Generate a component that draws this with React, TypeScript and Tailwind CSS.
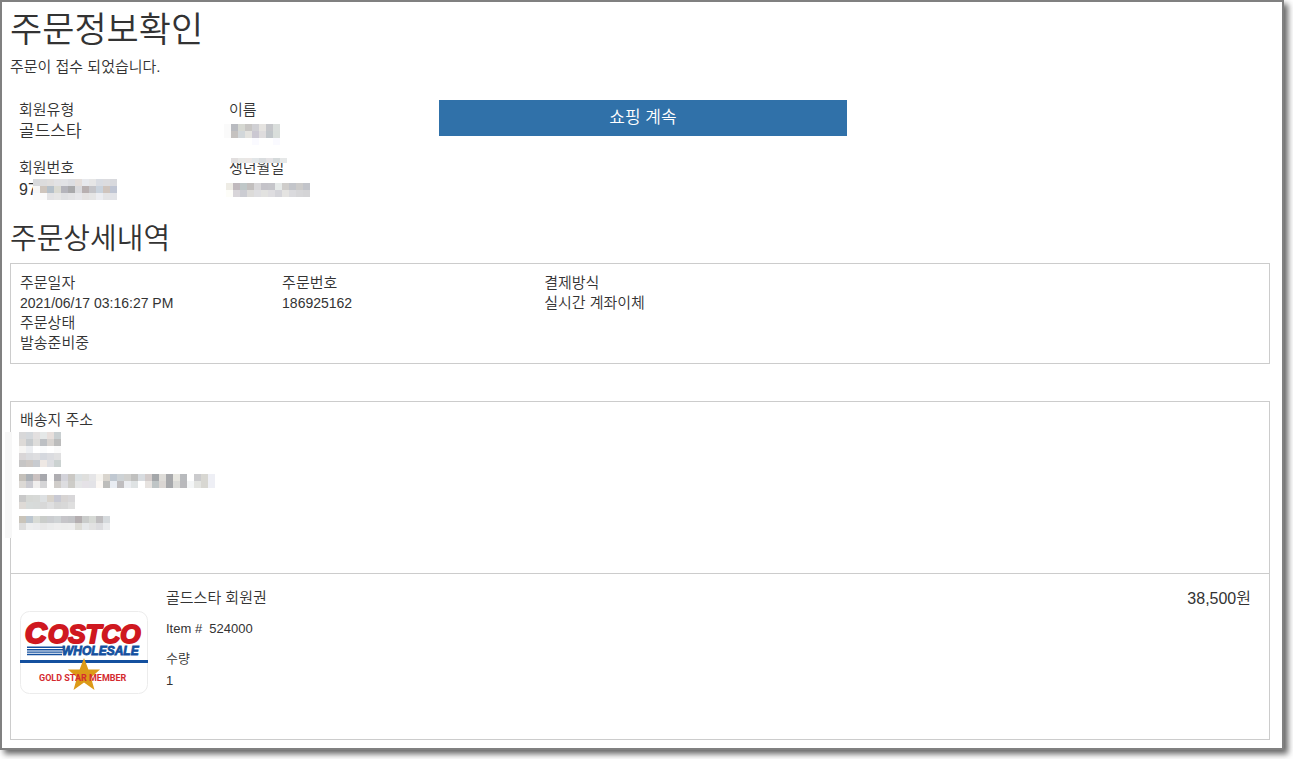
type MosaicProps = {
  rows: string[];
  label: string;
  className?: string;
}

const CELL = 7

// one 7px square per colour, "-" leaves a square empty
const Mosaic = ({ rows, label, className }: MosaicProps) => {
  const grid = rows.map((row) => row.split(" "))
  const width = Math.max(...grid.map((row) => row.length)) * CELL
  const height = grid.length * CELL

  return (
    <svg role="img" aria-label={label} width={width} height={height} shapeRendering="crispEdges" className={className}>
      {grid.map((row, y) =>
        row.map((color, x) =>
          color === "-" ? null : (
            <rect key={`${x}-${y}`} x={x * CELL} y={y * CELL} width={CELL} height={CELL} fill={`#${color}`} />
          )
        )
      )}
    </svg>
  )
}

const nameRows = [
  "fafafa b9bbc0 d6d8d2 c8c6c4 d0d0d4 e5e3e0 c5c6ca dadedc",
  "fafafa c5c2c0 d2d7da e4e3df cbc8d2 dedcdd c1c6ca d9dedb",
  "- - - - fafaff - - fafaff",
]

const numberRows = [
  "d9dadc dcdcdd e0dedd e2e2e4 e2e3e6 dddee2 e4dedb e7e9ed e6e6e6 d9dce2 dcdcdf d8d9dd",
  "f7f7f7 cec5bd b5c0c9 dadad2 b4b4bb a9a9ab dadadd b8b0b0 c4c4c8 c9d2dc cfc4bd bfc5d3",
  "fafafa fafafa e3e3e5 e6e6e6 dfe0e2 e3e3e5 e7e7ea e4e2e1 e5e5e5 ecedf1 e4e4e6 e2e3e7",
]

const birthTopRows = ["e2dfdf e8e8e6 ebe7e5 e2e6e8 dadddf e5e3e5 d5dadb e6e8e8"]

const birthRows = [
  "eeece5 c0b9bd bfc7c8 c2bfbe d8d7d9 c4c3c9 c5c5ca e6eae9 cfcdcb c3c5ca cccbca c2c4ca",
  "fdfdf8 d8d5d9 cbccd2 dcdbd9 dedee1 e2e2e0 dedde0 d4d4d9 e4e3e1 dadadd d6d6d8 d4d4d6",
]

const recipientRows = [
  "d8d8d9 d4d8dc e3e0e0 e5e8e8 e7dfdc c9cfd1",
  "dddad7 c7cbce dedddb bdc0c4 d7d3d0 bcbcbc",
  "f6f5f3 eceef1 ffffff fafbfc ffffff fafafa",
  "d9d6d7 dadbde dedee0 d5d8de dbdce0 e0e0e1",
  "c6c5c5 cdc8c5 c8cbd0 eee8e4 dddee2 cbd2d1",
]

const addressRows = [
  "c4c0ba abb0b5 cbc2c1 a7a8ad fcfcfc aeadb1 d3d3da cac8c4 dbe0e2 dfdfdd e5e5e7 f5f3ef d9d5ce c0c8d1 cdd2d5 d0d0ce c0c0bf d8dce0 d3cccb a4a7aa dedcd8 a7a8ab e7e6e0 b8babd ffffff cbcbcd d8d7d2 eeeff5",
  "dcd9d5 cbcbd1 f0eeed d5d5d7 ffffff d0cdca dddde0 cdccc8 e5e6e7 e5e2e7 e3e3e7 fcf8f4 bdbdbb e9edf3 bfbdbf ebedf1 dfe3e4 ffffff e7e3e0 bfc5c6 dad6d3 a6a8ab dbdbd8 b9b9bc f4f6f7 e3e4e1 d8d7d2 eeeff5",
]

const zipRows = [
  "c9c9c9 d6d8d5 d7d9d7 dde0e2 d8d3cc c8c9d3 d7d4d3 d8d7d9",
  "dedad6 d7dbda d7dad9 d8d8d8 dfdfe0 d6d6d6 d8d8d8 dfdfdf",
]

const phoneRows = [
  "c9c4ba bcc6cf d8dbd6 cacdca cbcdd0 cfd3d5 c6c5c9 c2c3c6 b4aeb0 cacccb d6d9d5 bfbdbf d6dadd",
  "dddddd edeeef ebecee e8e8e8 ebecec eeeeee ededed eeeeee dddcd7 e6e8ea e2e2e2 dcdcdf eaebed",
]

const MemberCard = () => (
  <svg role="img" aria-label="Costco Wholesale Gold Star Member" width="128" height="84" viewBox="0 0 128 84" fontFamily="Liberation Sans, Arial, sans-serif" fontWeight="bold">
    <rect x="0.5" y="0.5" width="127" height="82" rx="9" fill="#fff" stroke="#ececec" />
    <g fontStyle="italic" fill="#cf1820" stroke="#cf1820" strokeLinejoin="round">
      <text x="5" y="32" fontSize="30" strokeWidth="2.4">C</text>
      <text x="28" y="32" fontSize="26" strokeWidth="2">OSTCO</text>
    </g>
    <g fill="#14509f">
      <path d="M7 35.500h38v1.400H7zM7 38h36v1.400H7zM7 40.400h35.500v1.400H7zM7 42.800h35v1.400H7z" />
      <rect y="49" width="128" height="3" />
      <text x="42" y="44" fontSize="12" fontStyle="italic" stroke="#14509f" strokeWidth="0.8">WHOLESALE</text>
    </g>
    <path d="M64 47l4.400 11.500H80l-9 8L74.500 79 64 71.500 53.500 79 57 66.500l-9-8h11.600z" fill="#dc9a18" />
    <text x="19" y="70" fontSize="9" fontFamily="Roboto, Liberation Sans, sans-serif" fill="#d42a30">GOLD STAR MEMBER</text>
  </svg>
)

const orderInfo = [
  { label: "주문일자", value: "2021/06/17 03:16:27 PM" },
  { label: "주문번호", value: "186925162" },
]

export default function App() {
  return (
    <div className="bg-white pr-[9px] pb-[9px] font-['Liberation_Sans','Noto_Sans_CJK_KR',sans-serif] font-[350] text-[#333]">
      <main className="border-2 border-[#808080] bg-white pt-2 pr-3 pb-2 pl-2 shadow-[4px_4px_6px_rgba(0,0,0,0.6)]">
        <h1 className="text-[35px] leading-10 font-[350]">주문정보확인</h1>
        <p className="mt-[7px] text-[15px] leading-5">주문이 접수 되었습니다.</p>

        <section className="mt-[22px] grid grid-cols-6">
          <dl className="pt-px pl-[9px]">
            <dt className="text-[15px] leading-5">회원유형</dt>
            <dd className="text-[17px] leading-6">골드스타</dd>
            <dt className="mt-3.5 text-[15px] leading-5">회원번호</dt>
            <dd className="flex h-6 text-base leading-6">
              <span className="w-3.5">97</span>
              <Mosaic rows={numberRows} label="회원번호 가림" className="relative mt-px" />
            </dd>
          </dl>
          <dl className="pt-px pl-[9px]">
            <dt className="text-[15px] leading-5">이름</dt>
            <dd className="-ml-[5px] h-6 pt-1">
              <Mosaic rows={nameRows} label="이름 가림" />
            </dd>
            <dt className="relative mt-3.5 text-[15px] leading-5">
              생년월일
              <Mosaic rows={birthTopRows} label="가림" className="absolute top-0 left-0.5 h-[5px]" />
            </dt>
            <dd className="-ml-[3px] h-6 pt-[5px]">
              <Mosaic rows={birthRows} label="생년월일 가림" />
            </dd>
          </dl>
          <div className="col-span-2 pt-px pr-[3px] pl-[9px]">
            <button type="button" className="h-9 w-full bg-[#3071a9] text-[17px] leading-6 font-[350] text-white">쇼핑 계속</button>
          </div>
        </section>

        <h2 className="mt-[21px] text-[29px] leading-8 font-[350]">주문상세내역</h2>

        <section className="mt-2 grid grid-cols-[5fr_5fr_14fr] border border-[#ccc] pt-[9px] pb-2.5 text-sm leading-5">
          {orderInfo.map((info) => (
            <dl key={info.label} className="pl-[9px]">
              <dt className="text-[15px] leading-5">{info.label}</dt>
              <dd>{info.value}</dd>
              {info.label === "주문일자" && (
                <>
                  <dt className="text-[15px] leading-5">주문상태</dt>
                  <dd className="text-[15px] leading-5">발송준비중</dd>
                </>
              )}
            </dl>
          ))}
          <dl className="pl-[9px] text-[15px] leading-5">
            <dt>결제방식</dt>
            <dd>실시간 계좌이체</dd>
          </dl>
        </section>

        <section className="mt-[37px] border border-[#ccc]">
          <div className="relative h-[171px] pt-2 pl-[9px]">
            <h3 className="text-[15px] leading-5 font-[350]">배송지 주소</h3>
            <div className="absolute top-[30px] -left-1.5 h-[106px] w-[7px] bg-[#f7f7f7]" />
            <div className="-ml-px flex flex-col gap-[7px] pt-0.5">
              <Mosaic rows={recipientRows} label="받는 사람 가림" />
              <Mosaic rows={addressRows} label="주소 가림" />
              <Mosaic rows={zipRows} label="우편번호 가림" />
              <Mosaic rows={phoneRows} label="전화번호 가림" />
            </div>
          </div>

          <div className="flex h-[166px] items-start border-t border-[#ccc] pr-[18px] pl-[9px]">
            <div className="pt-[37px]">
              <MemberCard />
            </div>
            <div className="ml-[18px] flex-1 pt-3.5 text-[13px] leading-5">
              <h4 className="text-[15px] leading-5 font-[350]">골드스타 회원권</h4>
              <p className="mt-[11px]">Item #&nbsp; 524000</p>
              <p className="mt-2.5">수량</p>
              <p className="mt-0.5">1</p>
            </div>
            <p className="pt-[13px] text-base leading-6">38,500원</p>
          </div>
        </section>
      </main>
    </div>
  );
}
